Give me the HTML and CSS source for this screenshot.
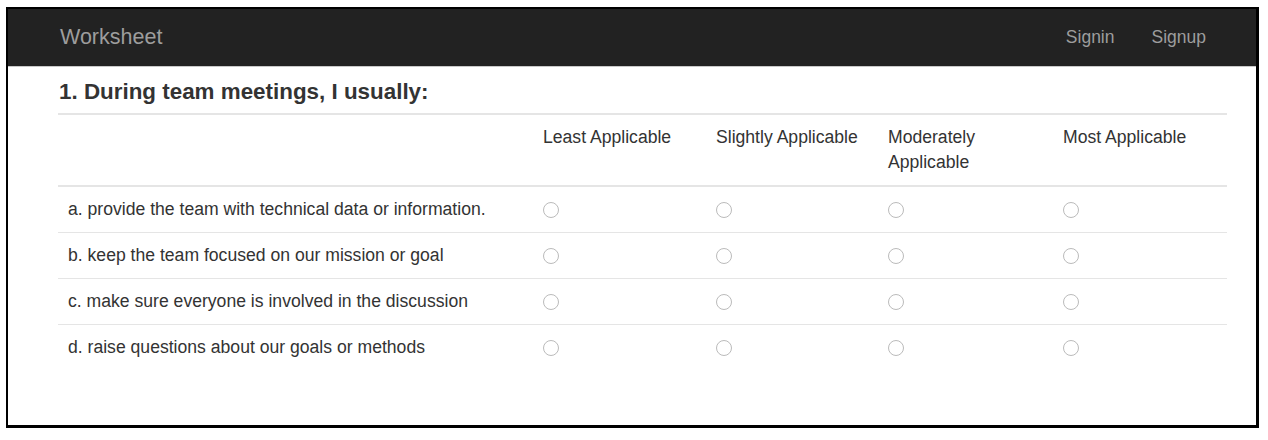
FILE: index.html
```html
<!DOCTYPE html>
<html>
<head>
<meta charset="utf-8">
<link rel="stylesheet" href="styles.css">
</head>
<body>
<div class="frame">
  <nav class="navbar">
    <span class="brand">Worksheet</span>
    <div class="nav-links">
      <span class="nav-link">Signin</span>
      <span class="nav-link">Signup</span>
    </div>
  </nav>
  <main class="content">
    <h4 class="question">1. During team meetings, I usually:</h4>
    <table class="survey">
      <colgroup>
        <col class="c-label">
        <col class="c-1">
        <col class="c-2">
        <col class="c-3">
        <col>
      </colgroup>
      <thead>
        <tr>
          <th></th>
          <th>Least Applicable</th>
          <th>Slightly Applicable</th>
          <th>Moderately<br>Applicable</th>
          <th>Most Applicable</th>
        </tr>
      </thead>
      <tbody>
        <tr>
          <td>a. provide the team with technical data or information.</td>
          <td><span class="radio"></span></td>
          <td><span class="radio"></span></td>
          <td><span class="radio"></span></td>
          <td><span class="radio"></span></td>
        </tr>
        <tr>
          <td>b. keep the team focused on our mission or goal</td>
          <td><span class="radio"></span></td>
          <td><span class="radio"></span></td>
          <td><span class="radio"></span></td>
          <td><span class="radio"></span></td>
        </tr>
        <tr>
          <td>c. make sure everyone is involved in the discussion</td>
          <td><span class="radio"></span></td>
          <td><span class="radio"></span></td>
          <td><span class="radio"></span></td>
          <td><span class="radio"></span></td>
        </tr>
        <tr>
          <td>d. raise questions about our goals or methods</td>
          <td><span class="radio"></span></td>
          <td><span class="radio"></span></td>
          <td><span class="radio"></span></td>
          <td><span class="radio"></span></td>
        </tr>
      </tbody>
    </table>
  </main>
</div>
</body>
</html>
```

FILE: styles.css
```css
html, body {
  margin: 0;
  padding: 0;
  background: #fff;
}

body {
  font-family: "Liberation Sans", Arial, Helvetica, sans-serif;
  color: #333;
}

.frame {
  margin: 7px 0 0 6px;
  width: 1253px;
  height: 421px;
  box-sizing: border-box;
  border-style: solid;
  border-color: #000;
  border-width: 2px 3px 3px 2px;
}

.navbar {
  display: flex;
  align-items: center;
  justify-content: space-between;
  height: 57px;
  background: #222;
  border-bottom: 1px solid #c9c9c9;
  padding: 0 50px 0 52px;
}

.brand {
  font-size: 21.5px;
  color: #9d9d9d;
}

.nav-links {
  display: flex;
  gap: 37px;
}

.nav-link {
  font-size: 17.5px;
  color: #9d9d9d;
}

.content {
  padding: 0 29px 0 50px;
}

.question {
  margin: 0;
  padding: 12px 0 9px 1px;
  font-size: 22.4px;
  font-weight: 600;
  line-height: 25px;
  color: #333;
  border-bottom: 2px solid #e5e5e5;
}

.survey {
  width: 100%;
  border-collapse: collapse;
  table-layout: fixed;
  font-size: 17.6px;
  line-height: 25px;
}

.c-label { width: 475px; }
.c-1 { width: 173px; }
.c-2 { width: 172px; }
.c-3 { width: 175px; }

.survey th {
  text-align: left;
  font-weight: normal;
  vertical-align: top;
  padding: 10px 10px 10px;
  border-bottom: 2px solid #e5e5e5;
}

.survey td {
  padding: 10px;
  border-top: 1px solid #e5e5e5;
  vertical-align: middle;
}

.survey tbody tr:first-child td {
  border-top: none;
}

.radio {
  display: inline-block;
  width: 16px;
  height: 16px;
  box-sizing: border-box;
  border: 1px solid #bbb;
  border-radius: 50%;
  vertical-align: middle;
  background: #fff;
}
```
